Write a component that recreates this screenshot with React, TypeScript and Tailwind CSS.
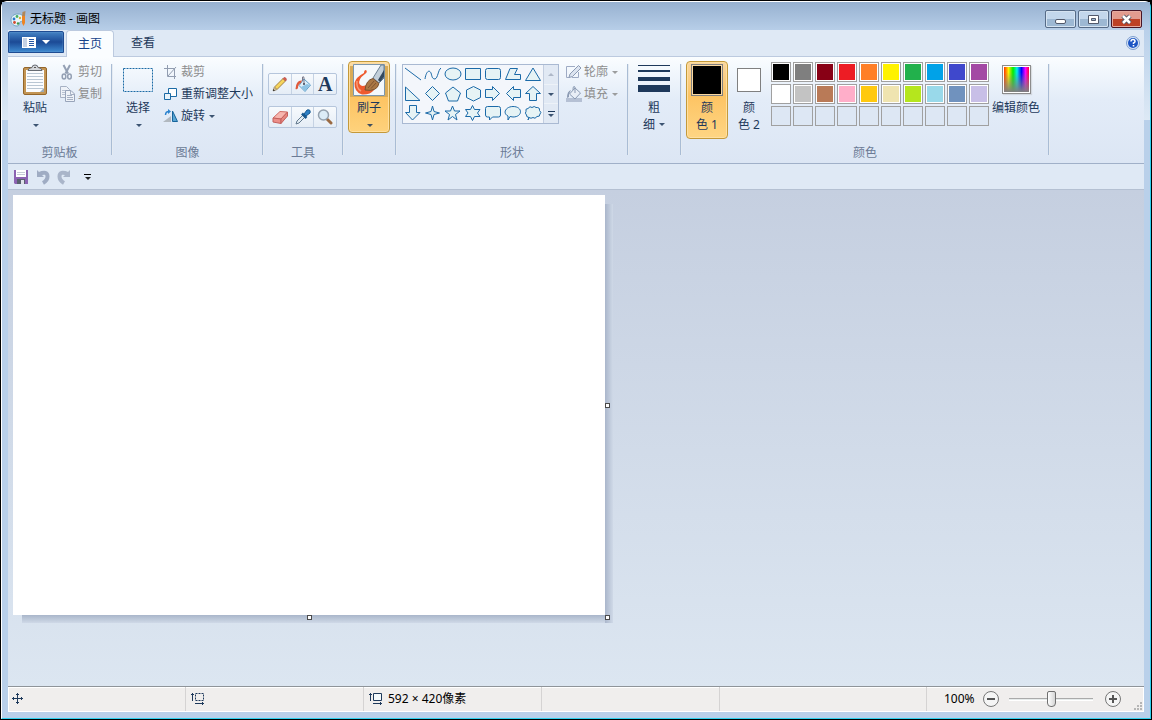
import { useState } from 'react';
import type { ReactNode } from 'react';

const paletteRows: (string | null)[][] = [
  ['#000000', '#7f7f7f', '#880015', '#ed1c24', '#ff7f27', '#fff200', '#22b14c', '#00a2e8', '#3f48cc', '#a349a4'],
  ['#ffffff', '#c3c3c3', '#b97a57', '#ffaec9', '#ffc90e', '#efe4b0', '#b5e61d', '#99d9ea', '#7092be', '#c8bfe7'],
  [null, null, null, null, null, null, null, null, null, null],
];

const shapes: { name: string; d: string }[] = [
  { name: '直线', d: 'M2 4L18 16' },
  { name: '曲线', d: 'M2 15C3 8 6 5 8 9C9 12 9 15 12 15C15 14 15 6 18 4' },
  { name: '椭圆形', d: 'M2 10a8 6 0 1 1 16 0a8 6 0 1 1 -16 0z' },
  { name: '矩形', d: 'M2.5 4.5h15v11h-15z' },
  { name: '圆角矩形', d: 'M4.5 4.5h11q2 0 2 2v7q0 2 -2 2h-11q-2 0 -2 -2v-7q0 -2 2 -2z' },
  { name: '多边形', d: 'M2.5 15.5L7 4.5H14.5L11.5 10.5H17.5V15.5z' },
  { name: '三角形', d: 'M10 4L2.5 16.5H17.5z' },
  { name: '直角三角形', d: 'M2.5 3V16.5H17z' },
  { name: '菱形', d: 'M9.5 2.5L16.5 9.5L9.5 16.5L2.5 9.5z' },
  { name: '五边形', d: 'M10 3L17.5 9L14.5 17H5.5L2.5 9z' },
  { name: '六边形', d: 'M10.5 2.5L17.5 6V13.5L10.5 17L3.5 13.5V6z' },
  { name: '右箭头', d: 'M2.5 5.5H9.5V2.5L16.5 9.5L9.5 16.5V13.5H2.5z' },
  { name: '左箭头', d: 'M17.5 5.5H10.5V2.5L3.5 9.5L10.5 16.5V13.5H17.5z' },
  { name: '上箭头', d: 'M10 2.5L17.5 9.5H13.5V16.5H6.5V9.5H2.5z' },
  { name: '下箭头', d: 'M6.5 2.5H13.5V9.5H17L9.5 17L2.5 9.5H6.5z' },
  { name: '四角星', d: 'M9.5 3L11 8.5L16.5 10L11 11.5L9.5 17L8 11.5L2.5 10L8 8.5z' },
  { name: '五角星', d: 'M9.5 3L11.5 8H17L12.5 11.5L14 17L9.5 13.5L5 17L6.5 11.5L2 8H7.5z' },
  { name: '六角星', d: 'M9.5 2.5L11.5 6.5H17L14.5 10L17 13.5H11.5L9.5 17.5L7.5 13.5H2.5L5 10L2.5 6.5H7.5z' },
  { name: '圆角矩形标注', d: 'M4.5 3.5H15.5Q17.5 3.500 17.5 5.5V12Q17.5 14 15.5 14H9.5L6.5 17V14H4.5Q2.5 14 2.5 12V5.5Q2.5 3.500 4.5 3.500z' },
  { name: '椭圆形标注', d: 'M7 13.5L5 17L5 13C-1 10 3 3.500 10 3.500C20 3.500 20 14 10 14z' },
  { name: '云形标注', d: 'M6 14.5L5 17L6 14.5Q3 14 3.500 12Q1.500 10 3 8.500Q2 5.500 5 5.500Q7 2.500 9 4.500Q11.500 2.500 13 4.500Q17 4 16.500 7.500Q19 9.500 17 11Q17 14 14 13.500Q12 16.500 10 14.500Q8 16 6 14.500z' },
];

function Arrow({ className = '' }: { className?: string }) {
  return (
    <svg width="6" height="3" viewBox="0 0 6 3" className={`shrink-0 ${className}`} fill="currentColor" fillOpacity=".85" aria-hidden="true">
      <path d="M0 0H6L3 3z" />
    </svg>
  );
}

function Group({ label, className, children }: { label?: string; className: string; children: ReactNode }) {
  return (
    <section className={`flex shrink-0 ${className}`} aria-label={label}>
      <div className="flex min-w-0 flex-1 flex-col">
        <div className="flex h-[84px] items-start">{children}</div>
        <div className="h-4 text-center leading-4 text-[#6b7b96]">{label}</div>
      </div>
      <div className="mt-[3px] mb-2 w-0.5 border-r border-white/70 bg-[#a9bcd4]" />
    </section>
  );
}

function BigButton({ icon, lines, arrow, className = '' }: { icon: ReactNode; lines: ReactNode; arrow?: boolean; className?: string }) {
  return (
    <button className={`flex w-[42px] shrink-0 flex-col items-center rounded-sm border text-center text-[#1e395b] ${className}`}>
      <span className="mt-0.5 flex h-8 items-center justify-center">{icon}</span>
      <span className="mt-[3px] leading-[17px]">{lines}</span>
      {arrow && <Arrow className="mt-2 ml-0.5" />}
    </button>
  );
}

function SmallButton({ icon, text, arrow, disabled }: { icon: ReactNode; text: string; arrow?: boolean; disabled?: boolean }) {
  return (
    <button disabled={disabled} className="flex h-[22px] items-center gap-0.5 whitespace-nowrap text-[#1e395b] disabled:text-[#8d8d8d]">
      {icon}
      <span>{text}</span>
      {arrow && <Arrow className="ml-0.5" />}
    </button>
  );
}

function Icon({ children, size = 16 }: { children: ReactNode; size?: number }) {
  return (
    <svg width={size} height={size} viewBox={`0 0 ${size} ${size}`} fill="none" className="shrink-0" aria-hidden="true">
      {children}
    </svg>
  );
}

function TitleBar() {
  return (
    <header className="flex h-7 shrink-0 items-start bg-linear-to-b from-[#97b1d0] to-[#b7cee8] pr-2 pl-2">
      <div className="mt-[7px] flex flex-1 items-center gap-1 text-black">
        <Icon>
          <path d="M1 9C1 5 4 3 8 3s6 2 5 6c-1 2-2 1-3 2s0 4-3 4-6-2-6-6z" fill="#e9f3f8" stroke="#6fa3c2" />
          <circle cx="4" cy="8" r="1.400" fill="#2878cc" />
          <circle cx="7" cy="5.500" r="1.400" fill="#45b063" />
          <circle cx="10" cy="7" r="1.200" fill="#d9b23a" />
          <circle cx="4.500" cy="11.500" r="1.400" fill="#d3492e" />
          <circle cx="8" cy="12.500" r="1.200" fill="#3b9a4b" />
          <path d="M12 5h3L15 12L13.500 15L12 12z" fill="#ee8422" />
          <path d="M12 5L12.500 1L15.500 0L15 5z" fill="#b0875a" />
        </Icon>
        <h1 className="leading-5">无标题 - 画图</h1>
      </div>
      <div className="mt-2 flex gap-0.5">
        <button aria-label="最小化" className="flex h-[18px] w-[31px] items-end justify-center rounded-xs border border-[#566b87] bg-linear-to-b from-[#c3d7ec] from-50% to-[#9db8d3] to-50% pb-[3px] shadow-[inset_0_0_0_1px_#d5e3f1]">
          <span className="h-[5px] w-[11px] rounded-xs border border-[#51596b] bg-white" />
        </button>
        <button aria-label="最大化" className="flex h-[18px] w-[31px] items-center justify-center rounded-xs border border-[#566b87] bg-linear-to-b from-[#c3d7ec] from-50% to-[#9db8d3] to-50% shadow-[inset_0_0_0_1px_#d5e3f1]">
          <Icon size={11}>
            <path d="M.5 1.500h10v8h-10z" fill="#fff" stroke="#51596b" />
            <path d="M3.500 4.500h4v2h-4z" fill="#9db8d3" stroke="#51596b" />
          </Icon>
        </button>
        <button aria-label="关闭" className="flex h-[18px] w-[31px] items-center justify-center rounded-xs border border-[#481525] bg-linear-to-b from-[#e29b8e] from-50% to-[#bd4126] to-50% shadow-[inset_0_0_0_1px_#e5aaa0]">
          <Icon size={11}>
            <path d="M2 2L9 9M9 2L2 9" stroke="#535666" strokeWidth="4.500" />
            <path d="M2 2L9 9M9 2L2 9" stroke="#fff" strokeWidth="2.500" />
          </Icon>
        </button>
      </div>
    </header>
  );
}

function TabRow() {
  return (
    <nav className="flex h-[27px] shrink-0 items-end border-b border-[#bccadf] bg-[#dfe9f5]">
      <button aria-label="画图" className="mb-[3px] flex h-[22px] w-14 items-center justify-center gap-1.5 rounded-t-xs border border-[#1f4c92] bg-linear-to-b from-[#4583c4] via-[#1c4a96] via-50% to-[#3f8ad0] text-white shadow-[inset_0_0_0_1px_#6c9fd540]">
        <svg width="14" height="11" viewBox="0 0 14 11" aria-hidden="true" shapeRendering="crispEdges">
          <path d="M0 0H14V11H0z" fill="#fff" />
          <path d="M1 1H5V10H1z" fill="#c5d2e5" />
          <path d="M7 2h5v1H7zM7 4h5v1H7zM7 6h5v1H7zM7 8h5v1H7z" fill="#2858a4" />
        </svg>
        <svg width="8" height="4" viewBox="0 0 8 4" fill="#fff" aria-hidden="true"><path d="M0 0H8L4 4z" /></svg>
      </button>
      <button className="-mb-px ml-0.5 h-[27px] w-12 rounded-t border border-b-0 border-[#bccadf] bg-[#fafdff] text-[#15428b]">主页</button>
      <button className="h-[26px] w-[58px] text-[#1e395b]">查看</button>
      <button aria-label="帮助" className="mr-1 mb-1.5 ml-auto">
        <Icon size={14}>
          <circle cx="7" cy="7" r="6.500" fill="#d9e6f6" stroke="#7f9fd0" />
          <circle cx="7" cy="7" r="5" fill="#1c55c4" />
          <path d="M5 5.500Q5 3.500 7 3.500T9 5.500Q9 6.500 7.500 7V8" stroke="#fff" strokeWidth="1.500" />
          <path d="M6.700 9h1.600v1.500H6.700z" fill="#fff" />
        </Icon>
      </button>
    </nav>
  );
}

function ClipboardGroup() {
  return (
    <Group label="剪贴板" className="w-[105px]">
      <BigButton
        arrow
        lines="粘贴"
        className="ml-1.5 border-transparent"
        icon={
          <svg width="26" height="32" viewBox="0 0 26 32" aria-hidden="true">
            <rect x="1.500" y="3.500" width="23" height="27" rx="1.500" fill="#c39554" stroke="#94662a" />
            <path d="M4 6H22V28H4z" fill="#fbfcfe" />
            <path d="M5 9.500H21M5 12.500H21M5 15.500H21M5 18.500H21M5 21.500H21M5 24.500H21" stroke="#b9c6d3" />
            <path d="M18 28L22 24V28z" fill="#9aa9b5" />
            <path d="M6 6.500Q6 4 10 3.500Q10 1 13 1T16 3.500Q20 4 20 6.500z" fill="#d3d6da" stroke="#666b73" />
            <path d="M12 3h2v1h-2z" fill="#555" />
          </svg>
        }
      />
      <div className="ml-1 flex flex-col">
        <SmallButton
          disabled
          text="剪切"
          icon={
            <Icon>
              <path d="M3.500 1L8 9.500M10 1L5.500 9.500" stroke="#94a0b4" strokeWidth="2" />
              <ellipse cx="4" cy="12.500" rx="1.800" ry="2.500" stroke="#94a0b4" strokeWidth="1.500" />
              <ellipse cx="9.500" cy="12.500" rx="1.800" ry="2.500" stroke="#94a0b4" strokeWidth="1.500" />
            </Icon>
          }
        />
        <SmallButton
          disabled
          text="复制"
          icon={
            <Icon>
              <path d="M.5 .5H6.500L9.500 3.500V11.500H.5z" fill="#eef2f8" stroke="#a6b1c4" />
              <path d="M2 4.500H7M2 6.500H7M2 8.500H7" stroke="#b9c2d2" />
              <path d="M5.500 4.500H11L14.500 8V15.500H5.500z" fill="#eef2f8" stroke="#98a4ba" />
              <path d="M10.500 4.500V8.500H14.500M7 9.500H12M7 11.500H13M7 13.500H13" stroke="#a6b1c4" />
            </Icon>
          }
        />
      </div>
    </Group>
  );
}

function ImageGroup() {
  return (
    <Group label="图像" className="w-[151px]">
      <BigButton
        arrow
        lines="选择"
        className="ml-1 border-transparent"
        icon={
          <svg width="30" height="24" viewBox="0 0 30 24" fill="none" aria-hidden="true">
            <path d="M.5 .5H29.500V23.500H.5z" stroke="#1b6aa5" strokeDasharray="2 1" />
          </svg>
        }
      />
      <div className="ml-1 flex flex-col">
        <SmallButton
          disabled
          text="裁剪"
          icon={
            <Icon>
              <path d="M4.500 1V12.500H13M1 4.500H11.500V15M5 12L13 3" stroke="#929db0" />
            </Icon>
          }
        />
        <SmallButton
          text="重新调整大小"
          icon={
            <Icon>
              <path d="M5.500 2.500H13.500V10.500H5.500z" fill="#fff" stroke="#1b6aa5" />
              <path d="M1.500 7.500H7.500V13.500H1.500z" fill="#e9f3fa" stroke="#1b6aa5" />
            </Icon>
          }
        />
        <SmallButton
          arrow
          text="旋转"
          icon={
            <Icon>
              <path d="M0 14H8V8z" fill="#b1b8bf" />
              <path d="M9.500 3V13.500H14.500z" fill="#5aa5d2" stroke="#17659c" />
              <path d="M2.500 7Q2.500 3.500 6 3.500" stroke="#2b83cf" strokeWidth="1.500" />
              <path d="M5 1L8 3.500L5 6z" fill="#2b83cf" />
            </Icon>
          }
        />
      </div>
    </Group>
  );
}

function ToolsGroup() {
  const toolClass = 'flex min-w-0 flex-1 items-center justify-center border-r border-[#c5d2e3] last:border-r-0';
  const rowClass = 'flex h-[22px] w-[69px] rounded-xs border border-[#b6c6dc] bg-linear-to-b from-[#f7fafd] to-[#e5edf6]';
  return (
    <Group label="工具" className="w-20">
      <div className="mt-3 ml-1 flex flex-col gap-[11px]">
        <div className={rowClass}>
          <button aria-label="铅笔" className={toolClass}>
            <Icon>
              <path d="M1 15L2 11.500L4.500 14z" fill="#f1d6a0" stroke="#695b46" strokeWidth=".5" />
              <path d="M2.500 11L11 2.500L13.500 5L5 13.500z" fill="#f6d45c" stroke="#8b6a2f" strokeWidth=".8" />
              <path d="M11 2.500L12 1.500Q14.500 1 14.500 4L13.500 5z" fill="#dc5d50" stroke="#a0413a" strokeWidth=".5" />
              <path d="M1 15L1.500 13L3 14.500z" fill="#222" />
            </Icon>
          </button>
          <button aria-label="用颜色填充" className={toolClass}>
            <Icon>
              <path d="M9 3L15.500 9L10 15.500L4 9.500z" fill="#dceef9" stroke="#5d9cc6" />
              <path d="M10 15L15 9L12 8L6 11z" fill="#8ec3e4" />
              <path d="M9 8V2Q9 0 7.500 1V5" stroke="#778" />
              <circle cx="9" cy="8" r="1" fill="#445" />
              <path d="M7 4.500Q1 4 .5 13Q2 14 3 12Q3 8 6 7z" fill="#e05a3b" />
            </Icon>
          </button>
          <button aria-label="文本" className={`${toolClass} font-['Liberation_Serif',serif] text-xl leading-5 font-bold text-[#1e395b]`}>A</button>
        </div>
        <div className={rowClass}>
          <button aria-label="橡皮擦" className={toolClass}>
            <Icon>
              <path d="M1 9L8 2.500L15.500 3L9 10z" fill="#f6b5ae" stroke="#cf6d67" />
              <path d="M1 9L9 10V14.500L1 13z" fill="#ec8e88" stroke="#c4605c" />
              <path d="M9 10L15.500 3V7L9 14.500z" fill="#e58680" stroke="#c4605c" />
            </Icon>
          </button>
          <button aria-label="颜色选取器" className={toolClass}>
            <Icon>
              <path d="M1 15L2 12L8 6L10 8L4 14z" fill="#e3edf4" stroke="#62798e" />
              <path d="M7 4.500L11.500 9" stroke="#17588f" strokeWidth="2.500" />
              <path d="M9 5L12 1Q16 0 15 4L11 7z" fill="#2d7fc4" stroke="#17588f" />
            </Icon>
          </button>
          <button aria-label="放大镜" className={toolClass}>
            <Icon>
              <path d="M10.500 10.500L14 14" stroke="#9a6a43" strokeWidth="3" strokeLinecap="round" />
              <circle cx="6.500" cy="6" r="5" fill="#dcecf7" stroke="#94a1ae" strokeWidth="1.500" />
            </Icon>
          </button>
        </div>
      </div>
    </Group>
  );
}

function BrushGroup() {
  return (
    <Group className="w-[53px]">
      <BigButton
        arrow
        lines="刷子"
        className="ml-1 h-[72px] border-[#c4993a] bg-linear-to-b from-[#fbdba6] from-0% via-[#fdc463] via-52% to-[#fed27c] shadow-[inset_0_0_0_1px_#ffe0a0]"
        icon={
          <span className="border-b border-[#d9ab57] shadow-[-4px_1px_0_-1px_#d9ab57,4px_1px_0_-1px_#d9ab57]">
            <svg width="32" height="32" viewBox="0 0 32 32" fill="none" className="block" aria-hidden="true">
              <path d="M.5 .5H31.500V31.500H.5z" fill="#f4f8fb" stroke="#7d97ac" />
              <path d="M13 6Q11 6 11 9Q3 13 1.500 19Q1 28 9 30.500Q17 31 21 26L15 20Q9 24 6.500 20Q5 15 12 10Q15 8 13 6z" fill="#ee5a2e" />
              <path d="M4 17Q3 24 8 27" stroke="#f79a76" strokeWidth="1.500" />
              <path d="M20 14L28 1H31V14L26 19z" fill="#c2cfda" stroke="#6c8194" />
              <path d="M25 16L31 6V13L27 18z" fill="#33485e" />
              <path d="M12 26Q13 16 20 14.500L26 19.500Q24 28 12 26z" fill="#aa7845" stroke="#7a5230" />
              <path d="M15 24L21 17M18 24.500L23 19" stroke="#805532" />
            </svg>
          </span>
        }
      />
    </Group>
  );
}

function ShapesGroup() {
  return (
    <Group label="形状" className="w-[232px]">
      <div className="mt-[3px] ml-[5px] flex h-[60px] border border-[#a9b9d2] bg-[#f3f6fb]">
        <div className="-mt-px grid grid-cols-7 grid-rows-3">
          {shapes.map((shape) => (
            <button key={shape.name} aria-label={shape.name} className="size-5">
              <svg width="20" height="20" viewBox="0 0 20 20" fill={shape.d.endsWith('z') ? '#e6f3f5' : 'none'} stroke="#1b6aa8" aria-hidden="true">
                <path d={shape.d} />
              </svg>
            </button>
          ))}
        </div>
        <div className="flex w-[15px] flex-col border-l border-[#c3cee0] bg-[#e1e9f4] text-[#1e395b]">
          <button aria-label="上一行" disabled className="flex flex-1 items-center justify-center border-b border-[#edf2f8] disabled:text-[#a4afbf]">
            <Arrow className="rotate-180" />
          </button>
          <button aria-label="下一行" className="flex flex-1 items-center justify-center border-b border-[#edf2f8]">
            <Arrow />
          </button>
          <button aria-label="更多形状" className="flex flex-1 flex-col items-center justify-center gap-0.5">
            <span className="h-px w-[7px] bg-current" />
            <Arrow />
          </button>
        </div>
      </div>
      <div className="ml-[7px] flex flex-col">
        <SmallButton
          arrow
          disabled
          text="轮廓"
          icon={
            <Icon>
              <path d="M9 2.500H.5V13.500H3M12.500 8V13.500H6" stroke="#9eabc4" />
              <path d="M3 13.500L4 10L12.500 1.500L15 4L6.500 12.500z" fill="#dce4f0" stroke="#8b9ab3" />
            </Icon>
          }
        />
        <SmallButton
          arrow
          disabled
          text="填充"
          icon={
            <Icon>
              <path d="M0 12H16V16H0z" fill="#b5c0d4" />
              <path d="M9 2L14.500 7L9 13L3.500 8z" fill="#e9eef6" stroke="#8b9ab3" />
              <path d="M9 7V1Q7 -1 7 4" stroke="#8b9ab3" />
              <path d="M5 4Q1 5 1 12L3 11V8z" fill="#8b9ab3" />
            </Icon>
          }
        />
      </div>
    </Group>
  );
}

function SizeGroup() {
  return (
    <Group className="w-[53px]">
      <BigButton
        className="ml-1 border-transparent"
        lines={
          <>
            粗<br />
            <span className="inline-flex items-center gap-1">细<Arrow /></span>
          </>
        }
        icon={
          <svg width="32" height="32" viewBox="0 0 32 32" fill="#1e395b" aria-hidden="true">
            <path d="M0 1H32V2H0zM0 6H32V8H0zM0 13H32V17H0zM0 21H32V28H0z" />
          </svg>
        }
      />
    </Group>
  );
}

function ColorsGroup() {
  const [color1, setColor1] = useState('#000000');

  return (
    <Group label="颜色" className="w-[368px]">
      <BigButton
        className="ml-1 h-[78px] border-[#c4993a] bg-linear-to-b from-[#f9d69f] from-0% via-[#fdc463] via-45% to-[#fed583] shadow-[inset_0_0_0_1px_#ffe0a0]"
        lines={<>颜<br />色 1</>}
        icon={
          <span className="size-8 border border-[#808080] bg-[#fbd9a0] p-px">
            <span className="block size-full" style={{ backgroundColor: color1 }} />
          </span>
        }
      />
      <BigButton
        className="h-[78px] border-transparent"
        lines={<>颜<br />色 2</>}
        icon={<span className="size-6 border border-[#808080] bg-white" />}
      />
      <div className="mt-px ml-px grid grid-cols-10 gap-0.5">
        {paletteRows.flat().map((color, i) => (
          <button
            key={i}
            aria-label={color ?? '自定义颜色'}
            disabled={!color}
            onClick={() => color && setColor1(color)}
            className={`size-5 border border-[#a0a0a0] p-px ${color ? 'bg-white' : 'bg-[#dde7f4]'}`}
          >
            {color && <span className="block size-full" style={{ backgroundColor: color }} />}
          </button>
        ))}
      </div>
      <button className="flex w-[54px] flex-col items-center whitespace-nowrap text-[#1e395b]">
        <span className="mt-1 size-[29px] border border-[#8c8c8c] bg-white p-px shadow-[1px_1px_1px_#9994]">
          <svg width="25" height="25" viewBox="0 0 25 25" aria-hidden="true">
            <defs>
              <linearGradient id="hue">
                <stop offset="0" stopColor="#f30" />
                <stop offset=".18" stopColor="#fe0" />
                <stop offset=".36" stopColor="#0e0" />
                <stop offset=".52" stopColor="#0ee" />
                <stop offset=".7" stopColor="#00f" />
                <stop offset=".86" stopColor="#f0f" />
                <stop offset="1" stopColor="#f03" />
              </linearGradient>
              <linearGradient id="fade" x2="0" y2="1">
                <stop offset=".2" stopColor="#808080" stopOpacity="0" />
                <stop offset="1" stopColor="#808080" />
              </linearGradient>
            </defs>
            <path d="M0 0H25V25H0z" fill="url(#hue)" />
            <path d="M0 0H25V25H0z" fill="url(#fade)" />
          </svg>
        </span>
        <span className="mt-[5px] leading-[17px]">编辑颜色</span>
      </button>
    </Group>
  );
}

function QuickAccess() {
  return (
    <div className="flex h-[26px] shrink-0 items-center border-b border-[#b4c0d2] bg-[#dfe9f5] pl-[5px] text-black">
      <button aria-label="保存">
        <Icon>
          <path d="M1 1H15V15H2L1 14z" fill="#8c63b2" />
          <path d="M3 1H13V8H3z" fill="#fff" />
          <path d="M4 3.500H12M4 5.500H12" stroke="#c6cbd6" />
          <path d="M4 10H12V15H4z" fill="#59616e" />
          <path d="M8 11H11V15H8z" fill="#dfe3ea" />
        </Icon>
      </button>
      <button aria-label="撤消" disabled className="ml-1.5">
        <Icon>
          <path d="M4 5Q12.500 1.500 12.500 7.500Q12.500 11.500 8 14" stroke="#9facc3" strokeWidth="4" />
          <path d="M2 1V8H9z" fill="#9facc3" />
        </Icon>
      </button>
      <button aria-label="重做" disabled className="ml-[5px]">
        <Icon>
          <path d="M12 5Q3.500 1.500 3.500 7.500Q3.500 11.500 8 14" stroke="#a9b5c9" strokeWidth="4" />
          <path d="M14 1V8H7z" fill="#a9b5c9" />
        </Icon>
      </button>
      <button aria-label="自定义快速访问工具栏" className="ml-3 flex flex-col items-center gap-0.5">
        <span className="h-px w-[7px] bg-current" />
        <Arrow />
      </button>
    </div>
  );
}

function Workspace() {
  const handle = 'absolute size-[5px] border border-[#4a4a4a] bg-white';
  return (
    <main className="flex-1 bg-linear-to-b from-[#c5cfe0] to-[#dce6f1] pt-[5px] pl-[5px]">
      <div className="relative h-[420px] w-[592px] bg-white">
        <div className="absolute top-full right-0 left-[9px] h-2 bg-linear-to-b from-[#a9b6ca] to-[#cfd9e7]" />
        <div className="absolute top-[9px] -bottom-2 left-full w-2 bg-linear-to-r from-[#aab6cb] to-[#cfd9e7]" />
        <span className={`${handle} top-[208px] left-full`} />
        <span className={`${handle} top-full left-[294px]`} />
        <span className={`${handle} top-full left-full`} />
      </div>
    </main>
  );
}

function StatusBar() {
  const [zoom, setZoom] = useState(50);
  const cell = 'flex items-center border-r border-[#d5d3d3]';

  return (
    <footer className="flex h-[25px] shrink-0 border border-t-0 border-white bg-[#f0eeed] text-black shadow-[inset_0_1px_0_#fff]">
      <div className={`${cell} w-[177px] pl-[3px]`}>
        <svg width="12" height="12" viewBox="0 0 12 12" fill="#1e395b" shapeRendering="crispEdges" aria-hidden="true">
          <path d="M5 0h1v11h-1zM0 5h11v1H0zM4 1h3v1H4zM4 9h3v1H4zM1 4h1v3H1zM9 4h1v3H9z" />
        </svg>
      </div>
      <div className={`${cell} w-[178px] pl-[5px]`}>
        <svg width="14" height="13" viewBox="0 0 14 13" fill="none" stroke="#1e395b" aria-hidden="true">
          <path d="M1.500 0V8M0 1.500H3M4 10.500H13M11.500 9V12" />
          <path d="M4.500 .5H12.500V7.500H4.500z" strokeDasharray="2 1" />
        </svg>
      </div>
      <div className={`${cell} w-[178px] gap-[5px] pl-[5px]`}>
        <svg width="14" height="13" viewBox="0 0 14 13" fill="none" stroke="#1e395b" aria-hidden="true">
          <path d="M1.500 0V8M0 1.500H3M4 10.500H13M11.500 9V12" />
          <path d="M4.500 .5H12.500V7.500H4.500z" fill="#f3f9fc" />
        </svg>
        <span>592 × 420像素</span>
      </div>
      <div className={`${cell} w-[178px]`} />
      <div className={`${cell} flex-1`} />
      <div className="flex items-center pl-[17px]">
        <label htmlFor="zoom" className="w-[39px]">100%</label>
        <button aria-label="缩小" onClick={() => setZoom(Math.max(0, zoom - 10))}>
          <Icon>
            <circle cx="8" cy="8" r="7.500" fill="#f5f5f5" stroke="#777" />
            <path d="M4 7H12V9H4z" fill="#555" />
          </Icon>
        </button>
        <input
          id="zoom"
          type="range"
          value={zoom}
          onChange={(e) => setZoom(Number(e.target.value))}
          className="mr-3 ml-2.5 h-4 w-[84px] appearance-none bg-transparent [&::-webkit-slider-runnable-track]:h-[3px] [&::-webkit-slider-runnable-track]:border-t [&::-webkit-slider-runnable-track]:border-b [&::-webkit-slider-runnable-track]:border-t-[#aaa] [&::-webkit-slider-runnable-track]:border-b-white [&::-webkit-slider-runnable-track]:bg-[#e6ebeb] [&::-webkit-slider-thumb]:-mt-2 [&::-webkit-slider-thumb]:h-4 [&::-webkit-slider-thumb]:w-[9px] [&::-webkit-slider-thumb]:appearance-none [&::-webkit-slider-thumb]:rounded-t-xs [&::-webkit-slider-thumb]:rounded-b [&::-webkit-slider-thumb]:border [&::-webkit-slider-thumb]:border-[#707070] [&::-webkit-slider-thumb]:bg-linear-to-r [&::-webkit-slider-thumb]:from-white [&::-webkit-slider-thumb]:to-[#d5d5d5]"
        />
        <button aria-label="放大" onClick={() => setZoom(Math.min(100, zoom + 10))}>
          <Icon>
            <circle cx="8" cy="8" r="7.500" fill="#f5f5f5" stroke="#777" />
            <path d="M4 7H7V4H9V7H12V9H9V12H7V9H4z" fill="#555" />
          </Icon>
        </button>
        <svg width="9" height="9" viewBox="0 0 9 9" fill="#b5b5b5" className="ml-[13px] self-end" aria-hidden="true">
          <path d="M6 0h2v2H6zM3 3h2v2H3zM6 3h2v2H6zM0 6h2v2H0zM3 6h2v2H3zM6 6h2v2H6z" />
        </svg>
      </div>
    </footer>
  );
}

export default function App() {
  return (
    <div className="flex min-h-screen flex-col bg-black p-px font-['Noto_Sans','Noto_Sans_CJK_SC',sans-serif] text-xs">
      <div className="flex flex-1 flex-col rounded-t-md border border-t-white border-r-[#2fd0ee] border-b-[#2fd0ee] border-l-white bg-[#b9d0ea]">
        <TitleBar />
        <div className="flex flex-1 flex-col bg-linear-to-b from-[#b9d0ea] to-[#dde9f5] bg-[length:100%_90px] bg-no-repeat px-1.5 pb-1.5">
          <TabRow />
          {/* Ribbon */}
          <div className="flex h-[107px] shrink-0 overflow-hidden border-b border-[#a0b0c8] bg-linear-to-b from-[#fafdff] via-[#e3ecf8] via-40% to-[#dce6f4] pt-1">
            <ClipboardGroup />
            <ImageGroup />
            <ToolsGroup />
            <BrushGroup />
            <ShapesGroup />
            <SizeGroup />
            <ColorsGroup />
          </div>
          <QuickAccess />
          <Workspace />
          <div className="h-px shrink-0 bg-[#8f9499]" />
          <StatusBar />
        </div>
      </div>
    </div>
  );
}
